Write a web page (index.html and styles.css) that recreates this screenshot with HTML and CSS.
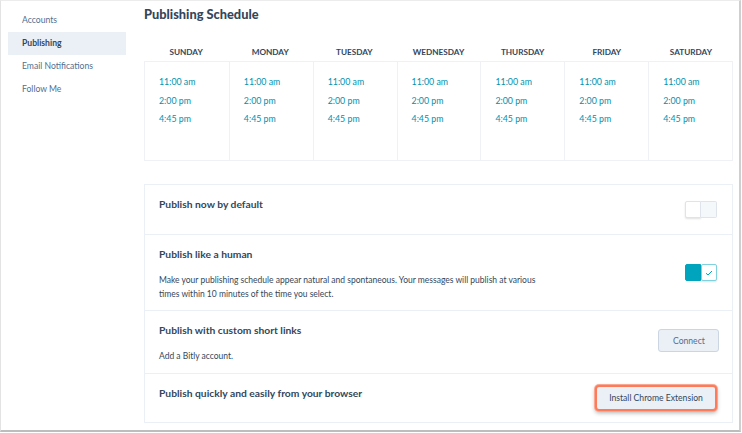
FILE: index.html
```html
<!DOCTYPE html>
<html>
<head>
  <title>Social Settings - Publishing</title>
  <link rel="stylesheet" href="styles.css">
</head>
<body>
  <div class="frame">
    <aside class="sidebar">
      <a href="#" class="side-link">Accounts</a>
      <a href="#" class="side-link active">Publishing</a>
      <a href="#" class="side-link">Email Notifications</a>
      <a href="#" class="side-link">Follow Me</a>
    </aside>

    <main class="content">
      <h1 class="page-title">Publishing Schedule</h1>

      <div class="schedule">
        <div class="day-names">
          <div class="day-name">Sunday</div>
          <div class="day-name">Monday</div>
          <div class="day-name">Tuesday</div>
          <div class="day-name">Wednesday</div>
          <div class="day-name">Thursday</div>
          <div class="day-name">Friday</div>
          <div class="day-name">Saturday</div>
        </div>
        <div class="day-grid">
          <div class="day-col">
            <a href="#">11:00 am</a>
            <a href="#">2:00 pm</a>
            <a href="#">4:45 pm</a>
          </div>
          <div class="day-col">
            <a href="#">11:00 am</a>
            <a href="#">2:00 pm</a>
            <a href="#">4:45 pm</a>
          </div>
          <div class="day-col">
            <a href="#">11:00 am</a>
            <a href="#">2:00 pm</a>
            <a href="#">4:45 pm</a>
          </div>
          <div class="day-col">
            <a href="#">11:00 am</a>
            <a href="#">2:00 pm</a>
            <a href="#">4:45 pm</a>
          </div>
          <div class="day-col">
            <a href="#">11:00 am</a>
            <a href="#">2:00 pm</a>
            <a href="#">4:45 pm</a>
          </div>
          <div class="day-col">
            <a href="#">11:00 am</a>
            <a href="#">2:00 pm</a>
            <a href="#">4:45 pm</a>
          </div>
          <div class="day-col">
            <a href="#">11:00 am</a>
            <a href="#">2:00 pm</a>
            <a href="#">4:45 pm</a>
          </div>
        </div>
      </div>

      <div class="settings">
        <div class="setting-row row-default">
          <div class="setting-text">
            <div class="setting-title">Publish now by default</div>
          </div>
          <div class="toggle">
            <span class="toggle-left"></span>
            <span class="toggle-right"></span>
          </div>
        </div>

        <div class="setting-row row-human">
          <div class="setting-text">
            <div class="setting-title">Publish like a human</div>
            <p class="setting-desc">Make your publishing schedule appear natural and spontaneous. Your messages will publish at various times within 10 minutes of the time you select.</p>
          </div>
          <div class="toggle on">
            <span class="toggle-left"></span>
            <span class="toggle-right">
              <svg width="8" height="6" viewBox="0 0 8 6"><path d="M1 3.2 L3 5 L7 1" fill="none" stroke="#00a4bd" stroke-width="1"/></svg>
            </span>
          </div>
        </div>

        <div class="setting-row row-links">
          <div class="setting-text">
            <div class="setting-title">Publish with custom short links</div>
            <p class="setting-desc">Add a Bitly account.</p>
          </div>
          <button class="btn">Connect</button>
        </div>

        <div class="setting-row row-browser">
          <div class="setting-text">
            <div class="setting-title">Publish quickly and easily from your browser</div>
          </div>
          <button class="btn highlight">Install Chrome Extension</button>
        </div>
      </div>
    </main>
  </div>
</body>
</html>
```

FILE: styles.css
```css
* {
  margin: 0;
  padding: 0;
  box-sizing: border-box;
  font-family: Lato, "Open Sans", sans-serif;
}

body {
  background: #fff;
  color: #33475b;
  width: 742px;
  height: 433px;
  overflow: hidden;
}

.frame {
  width: 741px;
  height: 432px;
  display: flex;
  background: #fff;
  border-left: 1px solid #e3e3e3;
  border-top: 1px solid #ececec;
  border-right: 2px solid #cfcfcf;
  border-bottom: 2px solid #bdbdbd;
}

.sidebar {
  width: 143px;
  padding: 8px 18px 0 7px;
  display: flex;
  flex-direction: column;
}

.side-link {
  display: block;
  height: 23px;
  line-height: 23px;
  padding-left: 14px;
  font-size: 8.6px;
  color: #516f90;
  text-decoration: none;
}

.side-link.active {
  background: #eaf0f6;
  color: #33475b;
  font-weight: 700;
}

.content {
  flex: 1;
  padding: 5px 6px 0 0;
}

.page-title {
  font-size: 12.8px;
  font-weight: 900;
  color: #33475b;
  height: 40px;
}

.day-names {
  display: grid;
  grid-template-columns: repeat(7, 1fr);
  height: 15px;
}

.day-name {
  text-align: center;
  text-transform: uppercase;
  font-size: 8.2px;
  font-weight: 700;
  color: #33475b;
  line-height: 12px;
}

.day-grid {
  display: grid;
  grid-template-columns: repeat(7, 1fr);
  height: 100px;
  border: 1px solid #eef2f6;
}

.day-col {
  display: flex;
  flex-direction: column;
  gap: 6px;
  padding: 14px 0 0 14px;
  border-left: 1px solid #eef2f6;
}

.day-col:first-child {
  border-left: none;
}

.day-col a {
  font-size: 8.8px;
  line-height: 12.5px;
  color: #0091ae;
  text-decoration: none;
}

.settings {
  margin-top: 23px;
  border: 1px solid #eaf0f6;
}

.setting-row {
  display: flex;
  justify-content: space-between;
  padding: 0 14px;
  border-top: 1px solid #eaf0f6;
}

.setting-row:first-child {
  border-top: none;
}

.setting-title {
  font-size: 10.3px;
  font-weight: 700;
  color: #33475b;
  line-height: 13px;
}

.setting-desc {
  font-size: 8.5px;
  line-height: 14px;
  color: #33475b;
  max-width: 392px;
}

.row-default {
  height: 49px;
  padding-top: 13px;
}

.row-human {
  height: 76px;
  padding-top: 13px;
}

.row-human .setting-desc {
  margin-top: 12px;
}

.row-links {
  height: 63px;
  padding-top: 13px;
}

.row-links .setting-desc {
  margin-top: 12px;
}

.row-browser {
  height: 49px;
  padding-top: 13px;
}

.toggle {
  display: flex;
  width: 33px;
  height: 18px;
  margin-top: 3px;
}

.row-human .toggle {
  margin-top: 16px;
}

.toggle-left,
.toggle-right {
  width: 16px;
  height: 17px;
  display: flex;
  align-items: center;
  justify-content: center;
}

.toggle-left {
  background: #fff;
  border: 1px solid #dfe3eb;
  border-radius: 2px 0 0 2px;
  box-shadow: 0 1px 2px rgba(0, 0, 0, 0.12);
}

.toggle-right {
  background: #f5f8fa;
  border: 1px solid #dfe3eb;
  border-left: none;
  border-radius: 0 2px 2px 0;
}

.toggle.on .toggle-left {
  background: #00a4bd;
  border-color: #00a4bd;
  box-shadow: none;
}

.toggle.on .toggle-right {
  background: #fff;
  border: 1px solid #7fd1de;
  border-radius: 2px;
  box-shadow: 0 1px 2px rgba(0, 0, 0, 0.12);
}

.btn {
  background: #eaf0f6;
  border: 1px solid #cbd6e2;
  border-radius: 3px;
  color: #506e91;
  font-size: 8.6px;
  height: 23px;
  padding: 0 14px;
  cursor: pointer;
}

.row-links .btn {
  width: 61px;
  margin-top: 5px;
  margin-right: -1px;
}

.btn.highlight {
  width: 122px;
  height: 26px;
  margin-top: -2px;
  margin-right: 1px;
  border: 2px solid #ff7a59;
  border-radius: 4px;
  padding: 0;
  box-shadow: 0 0 0 1px #f8a892, 0 2px 4px rgba(0, 0, 0, 0.3);
  color: #33475b;
}
```
